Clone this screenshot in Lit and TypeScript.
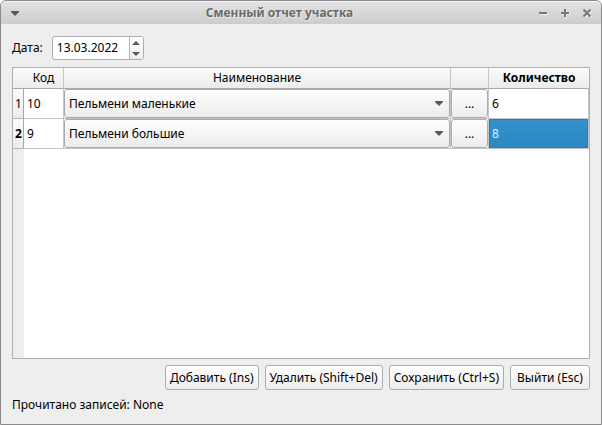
import { LitElement, html, css, svg } from "lit";
import { customElement, state } from "lit/decorators.js";
import { classMap } from "lit/directives/class-map.js";

interface Row {
  code: string;
  name: string;
  qty: string;
}

const PRODUCTS = ["Пельмени маленькие", "Пельмени большие"];

@customElement("app-root")
export class AppRoot extends LitElement {
  static styles = css`
    :host {
      display: flex;
      flex-direction: column;
      box-sizing: border-box;
      height: 100vh;
      overflow: hidden;
      border: 1px solid #8b898b;
      border-radius: 6px 6px 0 0;
      background: #eeeeee;
      color: #000;
      font: 12px/16px "Noto Sans", "Open Sans", sans-serif;
    }
    * {
      box-sizing: border-box;
    }
    button,
    input,
    select {
      font: inherit;
      color: inherit;
      margin: 0;
    }
    svg {
      display: block;
    }
    .titlebar {
      display: grid;
      grid-template-columns: 37px 1fr 80px;
      align-items: center;
      height: 23px;
      flex: none;
      padding: 0 5px;
      border-radius: 5px 5px 0 0;
      border-top: 1px solid #f4f4f4;
      background: linear-gradient(#e2e2e2, #cccccc);
    }
    .title {
      margin: 0;
      text-align: center;
      font-size: 12px;
      line-height: 20px;
      font-weight: bold;
      color: #6b6b6b;
      text-shadow: 1px 1px 0 #ececec;
    }
    .controls {
      display: flex;
      justify-content: flex-end;
      gap: 4px;
    }
    .ctl {
      width: 18px;
      height: 18px;
      padding: 0;
      border: 0;
      background: none;
      display: grid;
      place-items: center;
    }
    .content {
      flex: 1;
      min-height: 0;
      display: flex;
      flex-direction: column;
      padding: 12px 11px 11px;
    }
    .date-row {
      display: flex;
      align-items: center;
      gap: 9px;
      margin-bottom: 7px;
    }
    .spin {
      display: flex;
      width: 92px;
      height: 24px;
      border: 1px solid #adadad;
      border-radius: 3px;
      background: #fff;
      overflow: hidden;
    }
    .spin-input {
      flex: 1;
      min-width: 0;
      border: 0;
      outline: 0;
      padding: 0 4px;
      background: none;
    }
    .steps {
      display: flex;
      flex-direction: column;
      width: 14px;
      border-left: 1px solid #b5b5b5;
      background: linear-gradient(#fdfdfd, #ededed);
    }
    .step {
      flex: 1;
      padding: 0;
      border: 0;
      background: none;
      display: grid;
      place-items: center;
    }
    .view {
      flex: 1;
      min-height: 0;
      overflow: hidden;
      border: 1px solid #b0b0b0;
      background: linear-gradient(90deg, #eeeeee 11px, #fff 11px);
    }
    .grid {
      width: 100%;
      table-layout: fixed;
      border-collapse: separate;
      border-spacing: 0;
    }
    th,
    td {
      padding: 0;
      overflow: hidden;
      white-space: nowrap;
    }
    .c-num {
      width: 11px;
    }
    .c-code {
      width: 40px;
    }
    .c-more {
      width: 38px;
    }
    .c-qty {
      width: 100px;
    }
    .head {
      height: 21px;
      font-weight: normal;
      text-align: center;
      border-right: 1px solid #c6c6c6;
      border-bottom: 1px solid #a9a9a9;
      background: linear-gradient(#fbfbfb, #ececec);
    }
    .head.corner,
    .head.last {
      border-right: 0;
    }
    .head.last,
    .num.current {
      font-weight: bold;
    }
    .num {
      height: 30px;
      padding-left: 1px;
      font-weight: normal;
      text-align: center;
      border-right: 1px solid #a9a9a9;
      border-bottom: 1px solid #b4b4b4;
      background: linear-gradient(#fbfbfb, #ececec);
    }
    .cell {
      height: 30px;
      border-right: 1px solid #c6c6c6;
      border-bottom: 1px solid #c6c6c6;
      background: #fff;
    }
    .cell.code {
      padding-left: 3px;
    }
    .qty-input {
      display: block;
      width: 100%;
      height: 29px;
      border: 0;
      outline: 0;
      border-radius: 0;
      padding: 0 3px;
      background: none;
    }
    .qty-input.selected {
      padding: 0 2px;
      border: 1px solid #2a7cb5;
      background: linear-gradient(#3391cc, #2d87c2);
      color: #e0edf6;
    }
    .combo {
      display: grid;
      align-items: center;
    }
    .combo > * {
      grid-area: 1 / 1;
    }
    .combo-select {
      appearance: none;
      width: 100%;
      height: 29px;
      padding: 0 20px 0 4px;
      border: 1px solid #a9a9a9;
      border-radius: 3px;
      outline: 0;
      background: linear-gradient(#fefefe, #ececec);
    }
    .combo-arrow {
      justify-self: end;
      margin-right: 7px;
      pointer-events: none;
    }
    .btn {
      height: 25px;
      padding: 0;
      border: 1px solid #adadad;
      border-radius: 3px;
      background: linear-gradient(#fefefe, #ececec);
      white-space: nowrap;
    }
    .btn.more {
      display: block;
      width: 100%;
      height: 29px;
    }
    .actions {
      display: flex;
      justify-content: flex-end;
      gap: 6px;
      margin-top: 6px;
    }
    .actions .btn {
      min-width: 80px;
      padding: 0 4px;
    }
    .status {
      margin: 7px 0 0;
    }
  `;

  @state() private rows: Row[] = [
    { code: "10", name: PRODUCTS[0], qty: "6" },
    { code: "9", name: PRODUCTS[1], qty: "8" },
  ];
  @state() private current = 1;

  private arrow(d: string, h: number) {
    return html`<svg width="8" height=${h} viewBox="0 0 8 ${h}" aria-hidden="true">
      ${svg`<path d=${d} fill="#5a5a5a" />`}
    </svg>`;
  }

  private stroke(d: string) {
    return html`<svg width="10" height="10" viewBox="0 0 10 10" aria-hidden="true">
      ${svg`<path d=${d} transform="translate(1 1)" stroke="#ececec" stroke-width="2" fill="none" />
      <path d=${d} stroke="#777777" stroke-width="2" fill="none" />`}
    </svg>`;
  }

  private renderRow(row: Row, i: number) {
    const current = i === this.current;
    return html`<tr>
      <th scope="row" class=${classMap({ num: true, current })}>${i + 1}</th>
      <td class="cell code">${row.code}</td>
      <td class="cell">
        <div class="combo">
          <select class="combo-select" aria-label="Наименование">
            ${PRODUCTS.map((p) => html`<option ?selected=${p === row.name}>${p}</option>`)}
          </select>
          <span class="combo-arrow">${this.arrow("M0 0H8V1L4 5L0 1Z", 5)}</span>
        </div>
      </td>
      <td class="cell"><button class="btn more" aria-label="Выбрать">...</button></td>
      <td class="cell">
        <input
          class=${classMap({ "qty-input": true, selected: current })}
          aria-label="Количество"
          .value=${row.qty}
          @focus=${() => (this.current = i)}
        />
      </td>
    </tr>`;
  }

  render() {
    return html`
      <header class="titlebar">
        <button class="ctl" aria-label="Меню окна">${this.arrow("M0 0H8V1L4 5L0 1Z", 5)}</button>
        <h1 class="title">Сменный отчет участка</h1>
        <div class="controls">
          <button class="ctl" aria-label="Свернуть">${this.stroke("M1 5H9")}</button>
          <button class="ctl" aria-label="Развернуть">${this.stroke("M1 5H9M5 1V9")}</button>
          <button class="ctl" aria-label="Закрыть">${this.stroke("M1.5 1.5L8.5 8.5M8.5 1.5L1.5 8.5")}</button>
        </div>
      </header>
      <main class="content">
        <div class="date-row">
          <label for="date">Дата:</label>
          <div class="spin">
            <input id="date" class="spin-input" type="text" value="13.03.2022" />
            <div class="steps">
              <button class="step" aria-label="Больше">${this.arrow("M0 4H8L4 0Z", 4)}</button>
              <button class="step" aria-label="Меньше">${this.arrow("M0 0H8L4 4Z", 4)}</button>
            </div>
          </div>
        </div>
        <div class="view">
          <table class="grid">
            <colgroup>
              <col class="c-num" />
              <col class="c-code" />
              <col />
              <col class="c-more" />
              <col class="c-qty" />
            </colgroup>
            <thead>
              <tr>
                <td class="head corner"></td>
                <th scope="col" class="head">Код</th>
                <th scope="col" class="head">Наименование</th>
                <td class="head"></td>
                <th scope="col" class="head last">Количество</th>
              </tr>
            </thead>
            <tbody>
              ${this.rows.map((r, i) => this.renderRow(r, i))}
            </tbody>
          </table>
        </div>
        <div class="actions">
          <button class="btn">Добавить (Ins)</button>
          <button class="btn">Удалить (Shift+Del)</button>
          <button class="btn">Сохранить (Ctrl+S)</button>
          <button class="btn">Выйти (Esc)</button>
        </div>
        <p class="status">Прочитано записей: None</p>
      </main>
    `;
  }
}
